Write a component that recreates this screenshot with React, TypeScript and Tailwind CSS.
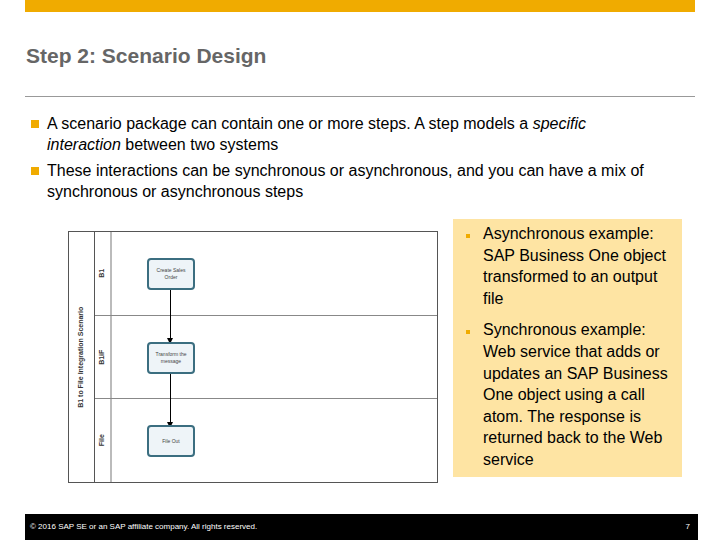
export default function App() {
  const f = { fontFamily: '"Liberation Sans", Arial, sans-serif' };
  const lanes = [
    { label: "B1", box: ["Create Sales", "Order"] },
    { label: "B1iF", box: ["Transform the", "message"] },
    { label: "File", box: ["File Out"] },
  ];
  return (
    <div className="w-[720px] h-[540px] bg-white relative overflow-hidden flex flex-col" style={f}>
      <div className="ml-[25px] w-[670px] h-[12px] bg-[#f0ab00]" />
      <div className="ml-[26px] mt-[31px] text-[21px] font-bold text-[#666666] leading-[26px]">Step 2: Scenario Design</div>
      <div className="ml-[25px] mt-[27px] w-[670px] h-px bg-[#999]" />
      <div className="ml-[31px] mt-[16px] text-[16px] leading-[21px] text-black flex flex-col gap-[5px]">
        <div className="flex">
          <div className="w-[8px] h-[8px] bg-[#f0ab00] mt-[7px] mr-[8px] shrink-0" />
          <div className="w-[615px]">A scenario package can contain one or more steps. A step models a <i>specific interaction</i> between two systems</div>
        </div>
        <div className="flex">
          <div className="w-[8px] h-[8px] bg-[#f0ab00] mt-[7px] mr-[8px] shrink-0" />
          <div className="w-[625px]">These interactions can be synchronous or asynchronous, and you can have a mix of synchronous or asynchronous steps</div>
        </div>
      </div>
      <div className="flex mt-[17px]">
        <div className="ml-[68px] mt-[12px] w-[370px] h-[252px] border border-[#555] flex">
          <div className="w-[26px] border-r border-[#555] flex items-center justify-center">
            <div className="-rotate-90 whitespace-nowrap text-[7px] font-bold text-[#333]">B1 to File Integration Scenario</div>
          </div>
          <div className="flex-1 flex flex-col">
            {lanes.map((l, i) => (
              <div key={i} className={`flex-1 flex ${i < 2 ? "border-b border-[#888]" : ""}`}>
                <div className="w-[17px] border-r-2 border-[#bbb] flex items-center justify-center">
                  <div className="-rotate-90 text-[7px] font-bold text-[#333]">{l.label}</div>
                </div>
                <div className="flex-1 relative">
                  <div className="absolute left-[35px] top-[26px] w-[48px] h-[32px] rounded-[4px] border-2 border-[#3b6e80] bg-[#eef4f8] flex flex-col items-center justify-center text-[5px] text-[#444] leading-[7px]">
                    {l.box.map((t) => <div key={t}>{t}</div>)}
                  </div>
                  {i < 2 && (
                    <div className="absolute left-[58px] top-[58px] w-px h-[54px] bg-black">
                      <div className="absolute -left-[3px] bottom-0 w-0 h-0 border-l-[3.5px] border-r-[3.5px] border-t-[6px] border-l-transparent border-r-transparent border-t-black" />
                    </div>
                  )}
                </div>
              </div>
            ))}
          </div>
        </div>
        <div className="ml-[15px] w-[229px] h-[258px] bg-[#fee4a3] pl-[13px] pt-[4px] text-[16px] leading-[21.6px] text-black flex flex-col gap-[10px]">
          <div className="flex">
            <div className="w-[4px] h-[4px] bg-[#f0ab00] mt-[11px] mr-[13px] shrink-0" />
            <div className="w-[185px]">Asynchronous example: SAP Business One object transformed to an output file</div>
          </div>
          <div className="flex">
            <div className="w-[4px] h-[4px] bg-[#f0ab00] mt-[11px] mr-[13px] shrink-0" />
            <div className="w-[185px]">Synchronous example: Web service that adds or updates an SAP Business One object using a call atom. The response is returned back to the Web service</div>
          </div>
        </div>
      </div>
      <div className="absolute left-[25px] top-[514px] w-[673px] h-[26px] bg-black flex items-center justify-between px-[5px] text-[8px] text-white">
        <span>© 2016 SAP SE or an SAP affiliate company. All rights reserved.</span>
        <span className="mr-[3px]">7</span>
      </div>
    </div>
  );
}
